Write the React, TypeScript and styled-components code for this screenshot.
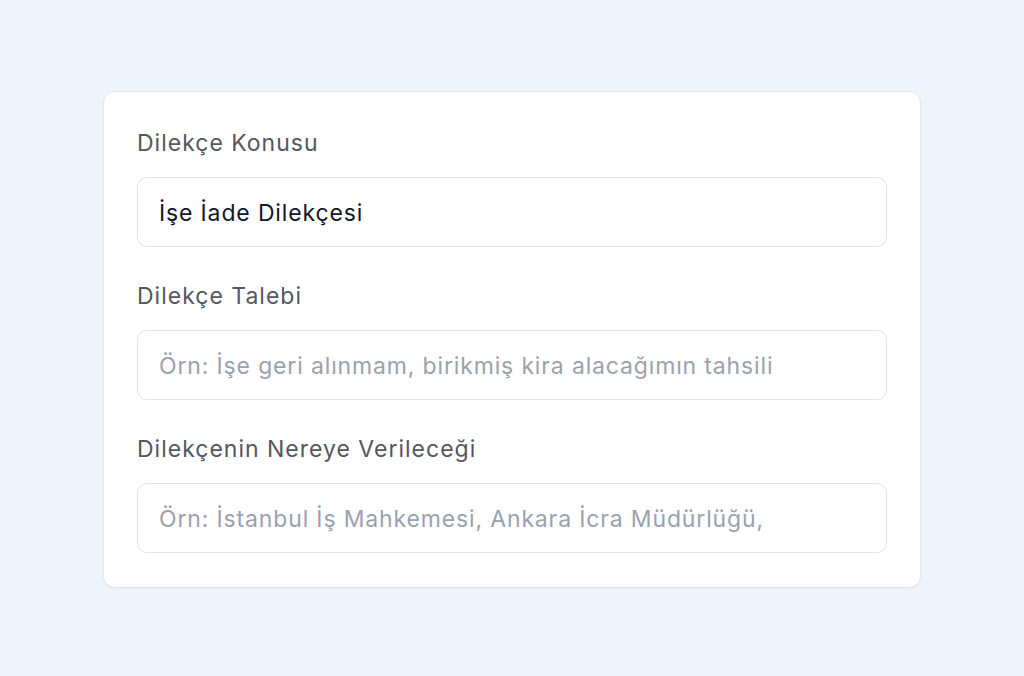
import styled, { createGlobalStyle } from "styled-components"

const GlobalStyle = createGlobalStyle`
    html, body {
        margin: 0;
        padding: 0;
        background: #f0f4fc;
        font-family: Inter, "Noto Sans", "DejaVu Sans", sans-serif;
    }
`

const fields = [
    { label: "Dilekçe Konusu", value: "İşe İade Dilekçesi", placeholder: "" },
    { label: "Dilekçe Talebi", value: "", placeholder: "Örn: İşe geri alınmam, birikmiş kira alacağımın tahsili" },
    { label: "Dilekçenin Nereye Verileceği", value: "", placeholder: "Örn: İstanbul İş Mahkemesi, Ankara İcra Müdürlüğü," },
]

export default function App() {
    return (
        <Page>
            <GlobalStyle />
            <Card>
                {fields.map(f => (
                    <Field key={f.label}>
                        <Label>{f.label}</Label>
                        <Input defaultValue={f.value} placeholder={f.placeholder} />
                    </Field>
                ))}
            </Card>
        </Page>
    )
}

const Page = styled.div`
    width: 1024px;
    height: 676px;
    display: flex;
    justify-content: center;
    padding-top: 91px;
    box-sizing: border-box;
`

const Card = styled.div`
    width: 818px;
    height: 497px;
    box-sizing: border-box;
    background: #ffffff;
    border: 1px solid #e1e5ee;
    border-radius: 12px;
    padding: 33px 33px;
    display: flex;
    flex-direction: column;
    gap: 31px;
    box-shadow: 0 1px 3px rgba(30, 40, 80, 0.04);
`

const Field = styled.div`
    display: flex;
    flex-direction: column;
    gap: 16px;
`

const Label = styled.label`
    font-size: 23px;
    line-height: 36px;
    letter-spacing: 1px;
    color: #55575e;
`

const Input = styled.input`
    height: 70px;
    box-sizing: border-box;
    border: 1.5px solid #e0e3ea;
    border-radius: 10px;
    padding: 2px 21px 0;
    font-family: inherit;
    font-size: 23px;
    letter-spacing: 0.85px;
    color: #111827;
    background: #ffffff;
    outline: none;

    &::placeholder {
        color: #9aa1af;
    }
`
